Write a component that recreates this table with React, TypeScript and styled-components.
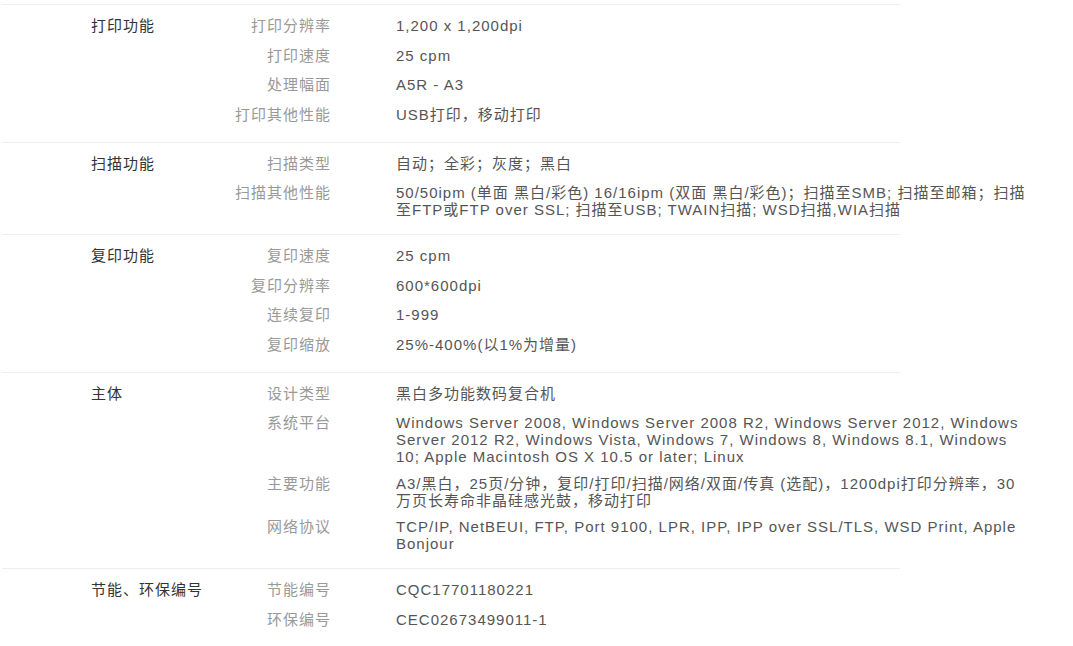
import styled, { createGlobalStyle } from "styled-components";

const GlobalStyle = createGlobalStyle`
  html, body {
    margin: 0;
    padding: 0;
    background: #fff;
  }
  body {
    font-family: "Liberation Sans", Arial, "Noto Sans CJK SC", sans-serif;
  }
`;

const Page = styled.div`
  padding: 4px 0 0 2px;
`;

const Section = styled.div`
  width: 898px;
  display: flex;
  align-items: flex-start;
  border-top: 1px solid #eeeeee;
  padding: 6px 0 12.5px;
`;

const Category = styled.div`
  width: 115px;
  padding-left: 89px;
  flex-shrink: 0;
  font-size: 15px;
  line-height: 29.5px;
  letter-spacing: 1px;
  color: #333;
`;

const Rows = styled.div`
  display: flex;
  flex-direction: column;
`;

const Row = styled.div`
  display: flex;
  align-items: flex-start;
`;

const Label = styled.div`
  width: 125px;
  flex-shrink: 0;
  text-align: right;
  font-size: 15px;
  line-height: 29.5px;
  letter-spacing: 1px;
  color: #999;
`;

const Value = styled.div`
  width: 632px;
  flex-shrink: 0;
  margin-left: 65px;
  padding: 6px 0 3.5px;
  font-size: 15px;
  line-height: 17px;
  letter-spacing: 1px;
  color: #555;
`;

type Spec = { title: string; items: [string, string][] };

const specs: Spec[] = [
  {
    title: "打印功能",
    items: [
      ["打印分辨率", "1,200 x 1,200dpi"],
      ["打印速度", "25 cpm"],
      ["处理幅面", "A5R - A3"],
      ["打印其他性能", "USB打印，移动打印"],
    ],
  },
  {
    title: "扫描功能",
    items: [
      ["扫描类型", "自动；全彩；灰度；黑白"],
      [
        "扫描其他性能",
        "50/50ipm (单面 黑白/彩色) 16/16ipm (双面 黑白/彩色)；扫描至SMB; 扫描至邮箱；扫描至FTP或FTP over SSL; 扫描至USB; TWAIN扫描; WSD扫描,WIA扫描",
      ],
    ],
  },
  {
    title: "复印功能",
    items: [
      ["复印速度", "25 cpm"],
      ["复印分辨率", "600*600dpi"],
      ["连续复印", "1-999"],
      ["复印缩放", "25%-400%(以1%为增量)"],
    ],
  },
  {
    title: "主体",
    items: [
      ["设计类型", "黑白多功能数码复合机"],
      [
        "系统平台",
        "Windows Server 2008, Windows Server 2008 R2, Windows Server 2012, Windows Server 2012 R2, Windows Vista, Windows 7, Windows 8, Windows 8.1, Windows 10; Apple Macintosh OS X 10.5 or later; Linux",
      ],
      [
        "主要功能",
        "A3/黑白，25页/分钟，复印/打印/扫描/网络/双面/传真 (选配)，1200dpi打印分辨率，30万页长寿命非晶硅感光鼓，移动打印",
      ],
      [
        "网络协议",
        "TCP/IP, NetBEUI, FTP, Port 9100, LPR, IPP, IPP over SSL/TLS, WSD Print, Apple Bonjour",
      ],
    ],
  },
  {
    title: "节能、环保编号",
    items: [
      ["节能编号", "CQC17701180221"],
      ["环保编号", "CEC02673499011-1"],
    ],
  },
];

const App = () => {
  return (
    <Page>
      <GlobalStyle />
      {specs.map((s) => (
        <Section key={s.title}>
          <Category>{s.title}</Category>
          <Rows>
            {s.items.map(([label, value]) => (
              <Row key={label}>
                <Label>{label}</Label>
                <Value>{value}</Value>
              </Row>
            ))}
          </Rows>
        </Section>
      ))}
    </Page>
  );
};

export default App;
